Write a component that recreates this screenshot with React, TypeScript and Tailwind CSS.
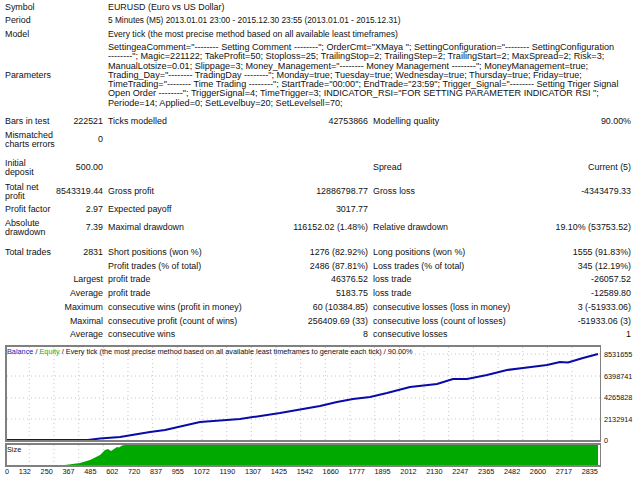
const font = "font-['Liberation_Sans',sans-serif] text-[8.9px] leading-[9.2px] text-[#111]";

function Row({ h, a, b, c, d, e, f }: { h: string; a?: React.ReactNode; b?: string; c?: string; d?: string; e?: string; f?: string }) {
  return (
    <div className={`grid grid-cols-[98px_265px_263px] items-center pl-[5px] ${h}`}>
      <div className="grid grid-cols-[auto_1fr] items-center">
        <div>{a}</div>
        <div className="text-right whitespace-nowrap">{b}</div>
      </div>
      <div className="grid grid-cols-[auto_1fr] items-center pl-[5px]">
        <div className="whitespace-nowrap">{c}</div>
        <div className="text-right whitespace-nowrap">{d}</div>
      </div>
      <div className="grid grid-cols-[auto_1fr] items-center pl-[5px]">
        <div className="whitespace-nowrap">{e}</div>
        <div className="text-right whitespace-nowrap">{f}</div>
      </div>
    </div>
  );
}

function Wide({ h, label, text, size }: { h: string; label: string; text: React.ReactNode; size: string }) {
  return (
    <div className={`grid grid-cols-[98px_1fr] items-center pl-[5px] ${h}`}>
      <div>{label}</div>
      <div className={`pl-[5px] whitespace-nowrap ${size}`}>{text}</div>
    </div>
  );
}

// page coordinates, read off the reference
const balance =
  "M7 440 L88 440 L100 438.5 L120 437 L150 432 L165 430 L200 422 L240 419 L280 413 L320 406 L337 402 L353 399 L370 397 L387 393 L410 387 L437 384 L453 379 L467 379 L487 375 L507 370 L523 368 L547 365 L560 362 L568 362.5 L583 358 L598 354";

const volume = "M65 465 L80 463 L90 460 L100 455 L105 450 L108 449 L111 451 L114 449 L117 447 L119 447.5 L122 445.5 L125 445 L598 445 L598 465 Z";

const xLabels = ["0", "132", "250", "367", "485", "602", "720", "837", "955", "1072", "1190", "1307", "1425", "1542", "1660", "1777", "1895", "2012", "2130", "2247", "2365", "2482", "2600", "2717", "2835"];

const yLabels = ["8531655", "6398741", "4265828", "2132914", "0"];

const xTicks = Array.from({ length: 23 }, (_, i) => 29.3 + i * 24.67);

export default function App() {
  return (
    <div className={`w-[640px] h-[480px] bg-white overflow-hidden ${font}`}>
      <div className="pt-[1px]">
        <Wide h="h-[13px]" size="text-[8.9px]" label="Symbol" text="EURUSD (Euro vs US Dollar)" />
        <Wide h="h-[14px]" size="text-[8.3px]" label="Period" text="5 Minutes (M5) 2013.01.01 23:00 - 2015.12.30 23:55 (2013.01.01 - 2015.12.31)" />
        <Wide h="h-[14px]" size="text-[8.6px]" label="Model" text="Every tick (the most precise method based on all available least timeframes)" />
        <Wide
          h="h-[67px]"
          size="text-[9.1px]"
          label="Parameters"
          text={
            <>
              SettingeaComment="-------- Setting Comment --------"; OrderCmt="XMaya "; SettingConfiguration="-------- SettingConfiguration
              <br />
              --------"; Magic=221122; TakeProfit=50; Stoploss=25; TrailingStop=2; TrailingStep=2; TrailingStart=2; MaxSpread=2; Risk=3;
              <br />
              ManualLotsize=0.01; Slippage=3; Money_Management="-------- Money Management --------"; MoneyManagement=true;
              <br />
              Trading_Day="-------- TradingDay --------"; Monday=true; Tuesday=true; Wednesday=true; Thursday=true; Friday=true;
              <br />
              TimeTrading="-------- Time Trading --------"; StartTrade="00:00"; EndTrade="23:59"; Trigger_Signal="-------- Setting Triger Signal
              <br />
              Open Order --------"; TriggerSignal=4; TimeTrigger=3; INDICATOR_RSI="FOR SETTING PARAMETER INDICATOR RSI ";
              <br />
              Periode=14; Applied=0; SetLevelbuy=20; SetLevelsell=70;
            </>
          }
        />
        <Row h="h-[13px] mt-[6px]" a="Bars in test" b="222521" c="Ticks modelled" d="42753866" e="Modelling quality" f="90.00%" />
        <Row h="h-[22px] mt-[1px]" a={<>Mismatched<br />charts errors</>} b="0" />
        <Row h="h-[22px] mt-[6px]" a={<>Initial<br />deposit</>} b="500.00" e="Spread" f="Current (5)" />
        <Row h="h-[22px] mt-[2px]" a={<>Total net<br />profit</>} b="8543319.44" c="Gross profit" d="12886798.77" e="Gross loss" f="-4343479.33" />
        <Row h="h-[14px]" a="Profit factor" b="2.97" c="Expected payoff" d="3017.77" />
        <Row h="h-[22px]" a={<>Absolute<br />drawdown</>} b="7.39" c="Maximal drawdown" d="116152.02 (1.48%)" e="Relative drawdown" f="19.10% (53753.52)" />
        <Row h="h-[14px] mt-[7px]" a="Total trades" b="2831" c="Short positions (won %)" d="1276 (82.92%)" e="Long positions (won %)" f="1555 (91.83%)" />
        <Row h="h-[13px]" c="Profit trades (% of total)" d="2486 (87.81%)" e="Loss trades (% of total)" f="345 (12.19%)" />
        <Row h="h-[14px]" b="Largest" c="profit trade" d="46376.52" e="loss trade" f="-26057.52" />
        <Row h="h-[13px]" b="Average" c="profit trade" d="5183.75" e="loss trade" f="-12589.80" />
        <Row h="h-[14px] mt-[1px]" b="Maximum" c="consecutive wins (profit in money)" d="60 (10384.85)" e="consecutive losses (loss in money)" f="3 (-51933.06)" />
        <Row h="h-[13px]" b="Maximal" c="consecutive profit (count of wins)" d="256409.69 (33)" e="consecutive loss (count of losses)" f="-51933.06 (3)" />
        <Row h="h-[14px]" b="Average" c="consecutive wins" d="8" e="consecutive losses" f="1" />
      </div>

      <div className="mt-[3px] ml-[5px] text-[7.3px] leading-[8px] text-[#111]">
        <div className="flex items-start h-[97px]">
          <div className="relative w-[596px] h-[97px] border border-[#808080] border-t-2 border-l-2 border-b-2 bg-white">
            <svg className="absolute inset-0" width="593" height="93" viewBox="7 347 593 93">
              {xTicks.map((x) => (
                <line key={x} x1={x} x2={x} y1="347" y2="440" stroke="#c8c8c8" strokeDasharray="1 3" />
              ))}
              {[354, 376, 398, 419].map((y) => (
                <line key={y} x1="7" x2="600" y1={y} y2={y} stroke="#c8c8c8" strokeDasharray="1 3" />
              ))}
              <path d={balance} fill="none" stroke="#0a0aa8" strokeWidth="2" />
            </svg>
            <div className="absolute left-0 top-[1px] whitespace-nowrap">
              <span className="text-[#2222aa]">Balance</span> / <span className="text-[#12b012]">Equity</span> / Every tick (the most precise method based on all available least timeframes to generate each tick) / 90.00%
            </div>
          </div>
          <div className="flex flex-col pl-[3px] pt-[6px]">
            {yLabels.map((l) => (
              <span key={l} className="h-[21.5px] shrink-0">{l}</span>
            ))}
          </div>
        </div>
        <div className="relative mt-[1px] w-[596px] h-[24px] border border-[#808080] border-t-2 border-l-2 border-b-2 bg-white">
          <svg className="absolute inset-0" width="593" height="20" viewBox="7 445 593 20">
            {xTicks.map((x) => (
              <line key={x} x1={x} x2={x} y1="445" y2="465" stroke="#c8c8c8" strokeDasharray="1 3" />
            ))}
            <path d={volume} fill="#00a900" />
          </svg>
          <div className="absolute left-0 top-[1px]">Size</div>
        </div>
        <div className="flex justify-between w-[593px] pt-[1px]">
          {xLabels.map((l) => (
            <span key={l}>{l}</span>
          ))}
        </div>
      </div>
    </div>
  );
}
